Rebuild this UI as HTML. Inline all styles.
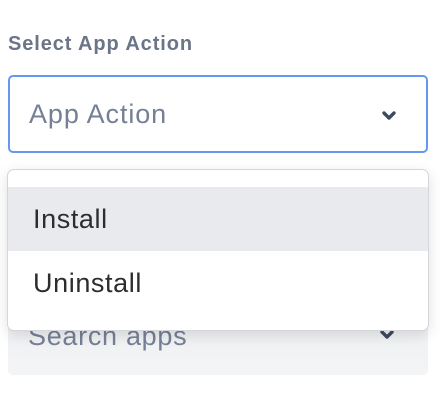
<!DOCTYPE html>
<html><head><style>
body{margin:0;width:440px;height:400px;background:#fff;font-family:"Liberation Sans",sans-serif;position:relative;overflow:hidden}
.lbl{position:absolute;left:8px;top:33px;font-size:20px;font-weight:bold;color:#6b7588;letter-spacing:0.9px}
.sel{position:absolute;left:8px;top:75px;width:416px;height:74px;border:2px solid #6499ee;border-radius:5px;box-sizing:content-box}
.sel span{position:absolute;left:19px;top:22px;font-size:27px;color:#758096;letter-spacing:0.9px}
.chev{position:absolute;width:18px;height:12px}
.s2{position:absolute;left:8px;top:175px;width:420px;height:200px;background:linear-gradient(#e4e5e9,#f3f4f6);border-radius:5px}
.s2 span{position:absolute;left:20px;top:146px;font-size:27px;color:#758096;letter-spacing:0.7px}
.dd{position:absolute;left:7px;top:169px;width:420px;height:160px;background:#fff;border:1px solid #d4d6da;border-radius:7px;box-shadow:0 4px 14px rgba(0,0,0,.12);overflow:hidden}
.row{position:absolute;left:0;width:420px;height:64px;font-size:27px;color:#2d2d2f;letter-spacing:0.6px}
.row span{position:absolute;left:25px;top:17px}
</style></head><body>
<div class="lbl">Select App Action</div>
<div class="sel"><span>App Action</span>
<svg class="chev" style="left:370px;top:33px" viewBox="0 0 18 12"><path d="M4 3 L9 8 L14 3" fill="none" stroke="#3d4960" stroke-width="3.4" stroke-linecap="round" stroke-linejoin="round"/></svg></div>
<div class="s2"><span>Search apps</span>
<svg class="chev" style="left:370px;top:154px" viewBox="0 0 18 12"><path d="M4 3 L9 8 L14 3" fill="none" stroke="#3d4960" stroke-width="3.4" stroke-linecap="round" stroke-linejoin="round"/></svg></div>
<div class="dd">
<div class="row" style="top:17px;background:#e9eaee"><span>Install</span></div>
<div class="row" style="top:81px"><span>Uninstall</span></div>
</div>
</body></html>
